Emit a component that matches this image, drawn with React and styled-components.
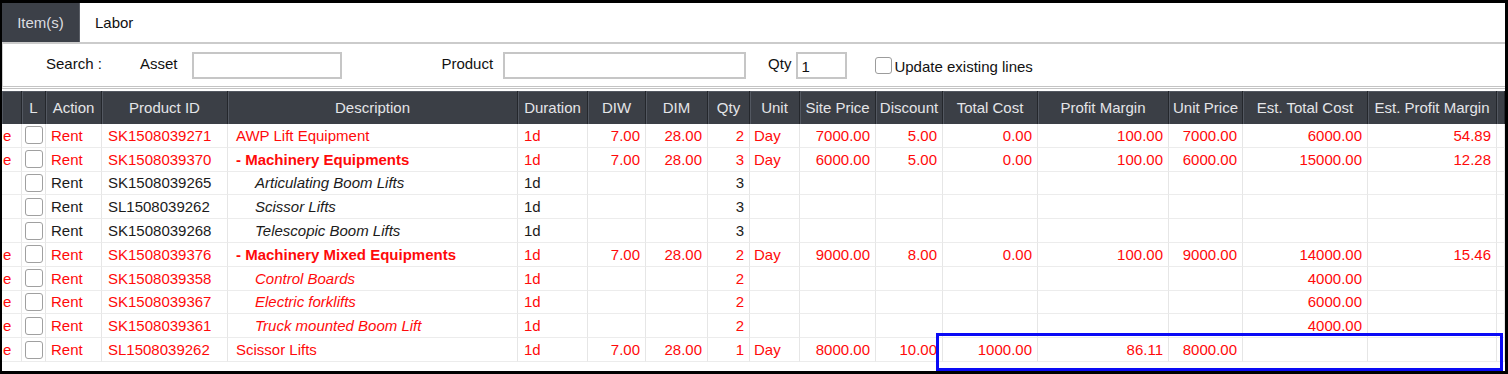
import React from "react";
import styled, { createGlobalStyle } from "styled-components";

const GlobalStyle = createGlobalStyle`
  html, body {
    margin: 0;
    padding: 0;
    background: #000;
  }
  body {
    font-family: "Liberation Sans", Arial, sans-serif;
  }
`;

const COLS = [20, 24, 56, 126, 290, 70, 58, 62, 42, 50, 76, 67, 95, 131, 74, 125, 129, 8];

const HEADERS = [
  "",
  "L",
  "Action",
  "Product ID",
  "Description",
  "Duration",
  "DIW",
  "DIM",
  "Qty",
  "Unit",
  "Site Price",
  "Discount",
  "Total Cost",
  "Profit Margin",
  "Unit Price",
  "Est. Total Cost",
  "Est. Profit Margin",
  "",
];

// kind: top = plain line, group = bold "- " group, child = italic indented
const ROWS = [
  { red: true, mark: true, id: "SK1508039271", desc: "AWP Lift Equipment", kind: "top", dur: "1d", diw: "7.00", dim: "28.00", qty: "2", unit: "Day", site: "7000.00", disc: "5.00", cost: "0.00", margin: "100.00", price: "7000.00", estCost: "6000.00", estMargin: "54.89" },
  { red: true, mark: true, id: "SK1508039370", desc: "- Machinery Equipments", kind: "group", dur: "1d", diw: "7.00", dim: "28.00", qty: "3", unit: "Day", site: "6000.00", disc: "5.00", cost: "0.00", margin: "100.00", price: "6000.00", estCost: "15000.00", estMargin: "12.28" },
  { red: false, mark: false, id: "SK1508039265", desc: "Articulating Boom Lifts", kind: "child", dur: "1d", qty: "3" },
  { red: false, mark: false, id: "SL1508039262", desc: "Scissor Lifts", kind: "child", dur: "1d", qty: "3" },
  { red: false, mark: false, id: "SK1508039268", desc: "Telescopic Boom Lifts", kind: "child", dur: "1d", qty: "3" },
  { red: true, mark: true, id: "SK1508039376", desc: "- Machinery Mixed Equipments", kind: "group", dur: "1d", diw: "7.00", dim: "28.00", qty: "2", unit: "Day", site: "9000.00", disc: "8.00", cost: "0.00", margin: "100.00", price: "9000.00", estCost: "14000.00", estMargin: "15.46" },
  { red: true, mark: true, id: "SK1508039358", desc: "Control Boards", kind: "child", dur: "1d", qty: "2", estCost: "4000.00" },
  { red: true, mark: true, id: "SK1508039367", desc: "Electric forklifts", kind: "child", dur: "1d", qty: "2", estCost: "6000.00" },
  { red: true, mark: true, id: "SK1508039361", desc: "Truck mounted Boom Lift", kind: "child", dur: "1d", qty: "2", estCost: "4000.00" },
  { red: true, mark: true, id: "SL1508039262", desc: "Scissor Lifts", kind: "top", dur: "1d", diw: "7.00", dim: "28.00", qty: "1", unit: "Day", site: "8000.00", disc: "10.00", cost: "1000.00", margin: "86.11", price: "8000.00", estCost: "", estMargin: "" },
];

const Frame = styled.div`
  position: relative;
  width: 1508px;
  height: 374px;
  box-sizing: border-box;
  border-style: solid;
  border-color: #000;
  border-width: 3px 3px 3px 2px;
  background: #fff;
  overflow: hidden;
  font-size: 15px;
`;

const TabBar = styled.div`
  display: flex;
  height: 39px;
  border-bottom: 2px solid #cbcbcb;
`;

const Tab = styled.div`
  display: flex;
  align-items: center;
  justify-content: ${(p) => (p.$active ? "center" : "flex-start")};
  padding: 0 15px;
  width: ${(p) => (p.$active ? "78px" : "auto")};
  box-sizing: border-box;
  background: ${(p) => (p.$active ? "#3c4048" : "#fff")};
  color: ${(p) => (p.$active ? "#dcdde0" : "#111")};
  border-right: ${(p) => (p.$active ? "1px solid #5a5e66" : "none")};
`;

const SearchBar = styled.div`
  display: flex;
  align-items: center;
  height: 42px;
  padding-left: 43px;
  border-left: 1px solid #d0d0d0;
  border-bottom: 3px double #c4c4c4;
  color: #111;
`;

const Field = styled.div`
  display: flex;
  align-items: center;
  gap: ${(p) => p.$gap}px;
  margin-left: ${(p) => p.$ml || 0}px;
`;

const Label = styled.span`
  padding-bottom: 3px;
`;

const TextInput = styled.div`
  width: ${(p) => p.$w}px;
  height: 27px;
  box-sizing: border-box;
  border: 2px solid #c6c6c6;
  background: #fff;
  display: flex;
  align-items: center;
  padding: 2px 0 0 3px;
  color: #111;
`;

const Box = styled.span`
  display: inline-block;
  width: 15px;
  height: 15px;
  border: 1px solid #9c9c9c;
  border-radius: 3px;
  background: #fff;
`;

const CheckLabel = styled.span`
  padding-top: 3px;
`;

const Table = styled.div`
  margin-top: 2px;
  display: grid;
  grid-template-columns: ${COLS.map((w) => `${w}px`).join(" ")};
  grid-template-rows: 33px;
  grid-auto-rows: 23.8px;
`;

const HeadCell = styled.div`
  display: flex;
  align-items: center;
  justify-content: center;
  background: #3b3f46;
  color: #e4e5e8;
  white-space: nowrap;
  overflow: hidden;
  box-sizing: border-box;
  border-right: 1px solid #24272c;
  box-shadow: inset 1px 1px 0 #535861;
`;

const Cell = styled.div`
  display: flex;
  align-items: center;
  justify-content: ${(p) => (p.$right ? "flex-end" : "flex-start")};
  padding: 0 ${(p) => (p.$right ? "5px" : "0")} 0 ${(p) => (p.$pl ?? 6)}px;
  box-sizing: border-box;
  white-space: nowrap;
  overflow: hidden;
  border-right: 1px solid #e6e6e6;
  border-bottom: 1px solid #ececec;
  color: ${(p) => (p.$red ? "#ff0a0a" : "#1b1b1b")};
  font-weight: ${(p) => (p.$bold ? 700 : 400)};
  font-style: ${(p) => (p.$italic ? "italic" : "normal")};
`;

const RowCheck = styled(Box)`
  width: 16px;
  height: 16px;
  border-color: #a0a0a0;
`;

const Highlight = styled.div`
  position: absolute;
  left: 934px;
  top: 330px;
  width: 567px;
  height: 38px;
  box-sizing: border-box;
  border: 3px solid #0a0af5;
  pointer-events: none;
`;

const Row = ({ r }) => {
  const red = r.red;
  const num = (v) => (
    <Cell $red={red} $right>
      {v}
    </Cell>
  );
  return (
    <>
      <Cell $red={red} $pl={1}>
        {r.mark ? "e" : ""}
      </Cell>
      <Cell $pl={3}>
        <RowCheck />
      </Cell>
      <Cell $red={red} $pl={5}>Rent</Cell>
      <Cell $red={red}>{r.id}</Cell>
      <Cell
        $red={red}
        $pl={r.kind === "child" ? 27 : 8}
        $bold={r.kind === "group"}
        $italic={r.kind === "child"}
      >
        {r.desc}
      </Cell>
      <Cell $red={red}>{r.dur}</Cell>
      {num(r.diw)}
      {num(r.dim)}
      {num(r.qty)}
      <Cell $red={red} $pl={4}>{r.unit}</Cell>
      {num(r.site)}
      {num(r.disc)}
      {num(r.cost)}
      {num(r.margin)}
      {num(r.price)}
      {num(r.estCost)}
      {num(r.estMargin)}
      <Cell />
    </>
  );
};

export default function App() {
  return (
    <>
      <GlobalStyle />
      <Frame>
        <TabBar>
          <Tab $active>Item(s)</Tab>
          <Tab>Labor</Tab>
        </TabBar>
        <SearchBar>
          <Label>Search :</Label>
          <Field $gap={15} $ml={38}>
            <Label>Asset</Label>
            <TextInput $w={150} />
          </Field>
          <Field $gap={10} $ml={99}>
            <Label>Product</Label>
            <TextInput $w={243} />
          </Field>
          <Field $gap={5} $ml={22}>
            <Label>Qty</Label>
            <TextInput $w={51}>1</TextInput>
          </Field>
          <Field $gap={2} $ml={28}>
            <Box />
            <CheckLabel>Update existing lines</CheckLabel>
          </Field>
        </SearchBar>
        <Table>
          {HEADERS.map((h, i) => (
            <HeadCell key={i}>{h}</HeadCell>
          ))}
          {ROWS.map((r, i) => (
            <Row key={i} r={r} />
          ))}
        </Table>
        <Highlight />
      </Frame>
    </>
  );
}
